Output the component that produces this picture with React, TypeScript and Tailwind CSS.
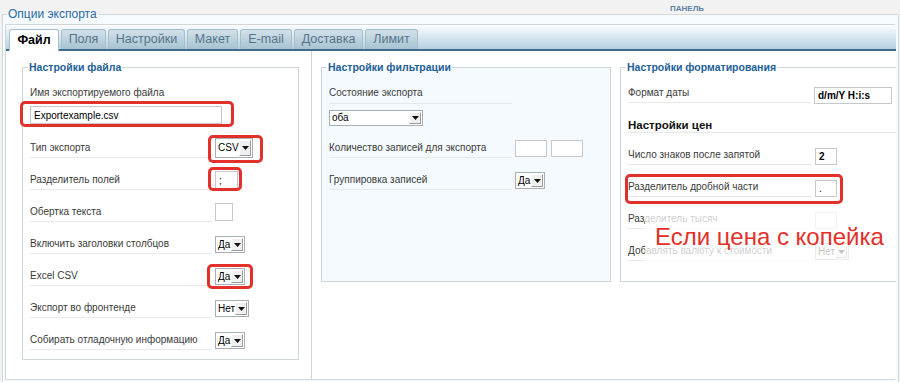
import React from "react";

const tabs = [
  { name: "Файл", w: "w-[50px]", active: true },
  { name: "Поля", w: "w-[45px]" },
  { name: "Настройки", w: "w-[77px]" },
  { name: "Макет", w: "w-[51px]" },
  { name: "E-mail", w: "w-[52px]" },
  { name: "Доставка", w: "w-[69px]" },
  { name: "Лимит", w: "w-[53px]" },
];

function Select({ value, w, h = "h-[17px]", mt = "mt-[8px]" }: { value: string; w: string; h?: string; mt?: string }) {
  return (
    <div className={`${w} ${h} ${mt} flex border border-[#a7aeb4] bg-white text-[10px] leading-none text-black`}>
      <div className="flex-1 flex items-center pl-[2px] whitespace-nowrap overflow-hidden">{value}</div>
      <div className="w-[12px] my-[1px] mr-[1px] flex items-center justify-center bg-[#f0f0f0] border border-[#9a9a9a] border-t-white border-l-white">
        <svg width="7" height="4" viewBox="0 0 7 4">
          <path d="M0 0h7L3.5 4z" fill="#111" />
        </svg>
      </div>
    </div>
  );
}

function Input({ value = "", w, h = "h-[18px]", mt = "mt-[7px]", bold = false }: { value?: string; w: string; h?: string; mt?: string; bold?: boolean }) {
  return (
    <div className={`${w} ${h} ${mt} flex items-center border border-[#c6c9cc] bg-white pl-[3px] text-[10px] text-black whitespace-nowrap ${bold ? "font-bold" : ""}`}>
      {value}
    </div>
  );
}

function Mark({ cls }: { cls: string }) {
  return <span className={`absolute ${cls} border-[3px] border-[#e3302a] rounded-[5px] pointer-events-none`} />;
}

function Row({ label, lw = "w-[182px]", children }: { label: string; lw?: string; children: React.ReactNode }) {
  return (
    <div className="flex items-start h-[32px]">
      <div className={`${lw} mr-[3px] mt-[9px] leading-[14px] pb-[2px] border-b border-[#e6e8ea] text-[10px] text-[#3a3a3a] whitespace-nowrap`}>
        {label}
      </div>
      {children}
    </div>
  );
}

function Legend({ children }: { children: React.ReactNode }) {
  return (
    <legend className="ml-[-2px] px-[1px] leading-[14px] text-[10.5px] font-bold text-[#1e5f96]">{children}</legend>
  );
}

export default function App() {
  return (
    <div className="relative w-[900px] h-[382px] overflow-hidden bg-[#f2f2f2] font-['Liberation_Sans',Arial,sans-serif]">
      <div className="h-[14px] flex items-end pl-[670px] pb-[1px]">
        <span className="text-[8px] leading-[9px] font-bold text-[#5b83a6]">ПАНЕЛЬ</span>
      </div>

      <fieldset className="-mt-[7px] ml-[2px] w-[895px] h-[400px] border border-[#d3d9dc] bg-[#f5fbff] px-[2px] pt-[3px]">
        <legend className="ml-[2px] px-[1px] leading-[14px] text-[12px] text-[#2b6ba3]">Опции экспорта</legend>

        <div className="w-[891px] h-[356px] border border-[#d3d6d8] border-r-0 rounded-[2px] bg-white overflow-hidden">
          <div className="h-[26px] flex items-end gap-[2px] pl-[3px] border-b-2 border-[#3d6c8e] bg-gradient-to-b from-[#fbfdfe] to-[#b4d1e2]">
            {tabs.map((t) =>
              t.active ? (
                <div key={t.name} className={`${t.w} h-[22px] -mb-[2px] flex items-center justify-center rounded-t-[3px] border border-b-0 border-[#a9bfcc] bg-white text-[12.5px] font-bold text-black`}>
                  {t.name}
                </div>
              ) : (
                <div key={t.name} className={`${t.w} h-[20px] flex items-center justify-center rounded-t-[3px] border border-b-0 border-[#a6bdca] bg-gradient-to-b from-[#d2e1e9] to-[#a8c3d2] text-[12.5px] text-[#54748b]`}>
                  {t.name}
                </div>
              )
            )}
          </div>

          <div className="flex h-[328px]">
            {/* left column */}
            <div className="w-[306px] shrink-0 border-r border-[#d3d6d8] pl-[16px]">
              <fieldset className="mt-[9px] w-[277px] h-[300px] border border-[#d0d6da] pl-[7px] pt-[12px]">
                <Legend>Настройки файла</Legend>
                <div className="leading-[14px] text-[10px] text-[#3a3a3a]">Имя экспортируемого файла</div>
                <div className="relative w-[192px]">
                  <Input value="Exportexample.csv" w="w-[192px]" mt="mt-[6px]" />
                  <Mark cls="-left-[10px] -right-[12px] -top-[5px] -bottom-[3px]" />
                </div>
                <div className="mt-[8px]">
                  <Row label="Тип экспорта">
                    <div className="relative">
                      <Select value="CSV" w="w-[38px]" h="h-[20px]" mt="mt-[6px]" />
                      <Mark cls="-left-[7px] -right-[10px] top-[3px] -bottom-[5px]" />
                    </div>
                  </Row>
                  <Row label="Разделитель полей">
                    <div className="relative">
                      <Input value=";" w="w-[23px]" />
                      <Mark cls="-left-[7px] -right-[4px] top-[3px] -bottom-[2px]" />
                    </div>
                  </Row>
                  <Row label="Обертка текста">
                    <Input w="w-[18px]" />
                  </Row>
                  <Row label="Включить заголовки столбцов">
                    <Select value="Да" w="w-[30px]" />
                  </Row>
                  <Row label="Excel CSV">
                    <div className="relative">
                      <Select value="Да" w="w-[30px]" />
                      <Mark cls="-left-[8px] -right-[8px] top-[4px] -bottom-[4px]" />
                    </div>
                  </Row>
                  <Row label="Экспорт во фронтенде">
                    <Select value="Нет" w="w-[34px]" />
                  </Row>
                  <Row label="Собирать отладочную информацию">
                    <Select value="Да" w="w-[30px]" />
                  </Row>
                </div>
              </fieldset>
            </div>

            {/* right area */}
            <div className="flex items-start gap-[9px] pl-[9px]">
              <fieldset className="mt-[9px] w-[290px] h-[222px] shrink-0 border border-[#d0d6da] bg-[#f5faff] pl-[7px] pt-[12px]">
                <Legend>Настройки фильтрации</Legend>
                <div className="w-[183px] leading-[14px] pb-[3px] border-b border-[#e6e8ea] text-[10px] text-[#3a3a3a]">Состояние экспорта</div>
                <Select value="оба" w="w-[94px]" h="h-[16px]" mt="mt-[6px]" />
                <div className="mt-[6px]">
                  <Row label="Количество записей для экспорта" lw="w-[183px]">
                    <div className="flex gap-[4px]">
                      <Input w="w-[32px]" h="h-[17px]" mt="mt-[8px]" />
                      <Input w="w-[32px]" h="h-[17px]" mt="mt-[8px]" />
                    </div>
                  </Row>
                  <Row label="Группировка записей" lw="w-[183px]">
                    <Select value="Да" w="w-[30px]" />
                  </Row>
                </div>
              </fieldset>

              <fieldset className="mt-[9px] w-[290px] h-[222px] shrink-0 border border-[#d0d6da] pl-[7px] pt-[3px]">
                <Legend>Настройки форматирования</Legend>
                <Row label="Формат даты" lw="w-[183px]">
                  <Input value="d/m/Y H:i:s" w="w-[78px]" h="h-[17px]" mt="mt-[10px]" bold />
                </Row>
                <div className="h-[30px] pt-[9px]">
                  <div className="leading-[14px] border-b border-[#e6e8ea] text-[11.5px] font-bold text-[#111]">Настройки цен</div>
                </div>
                <Row label="Число знаков после запятой" lw="w-[184px]">
                  <Input value="2" w="w-[22px]" h="h-[17px]" mt="mt-[9px]" bold />
                </Row>
                <div className="relative w-[209px]">
                  <Row label="Разделитель дробной части" lw="w-[184px]">
                    <Input value="." w="w-[22px]" h="h-[17px]" mt="mt-[9px]" />
                  </Row>
                  <Mark cls="-left-[3px] -right-[6px] top-[3px] -bottom-[1px]" />
                </div>
                <Row label="Разделитель тысяч" lw="w-[184px]">
                  <Input w="w-[22px]" h="h-[17px]" mt="mt-[9px]" />
                </Row>
                <Row label="Добавлять валюту к стоимости" lw="w-[184px]">
                  <Select value="Нет" w="w-[34px]" />
                </Row>
              </fieldset>
            </div>
          </div>
        </div>
      </fieldset>

      {/* annotation over the form */}
      <div className="absolute left-[645px] top-[208px] w-[251px] h-[54px] bg-white/75 pl-[10px] pt-[15px]">
        <div className="text-[24px] leading-[28px] text-[#e3302a] whitespace-nowrap">Если цена с копейка</div>
      </div>
    </div>
  );
}
